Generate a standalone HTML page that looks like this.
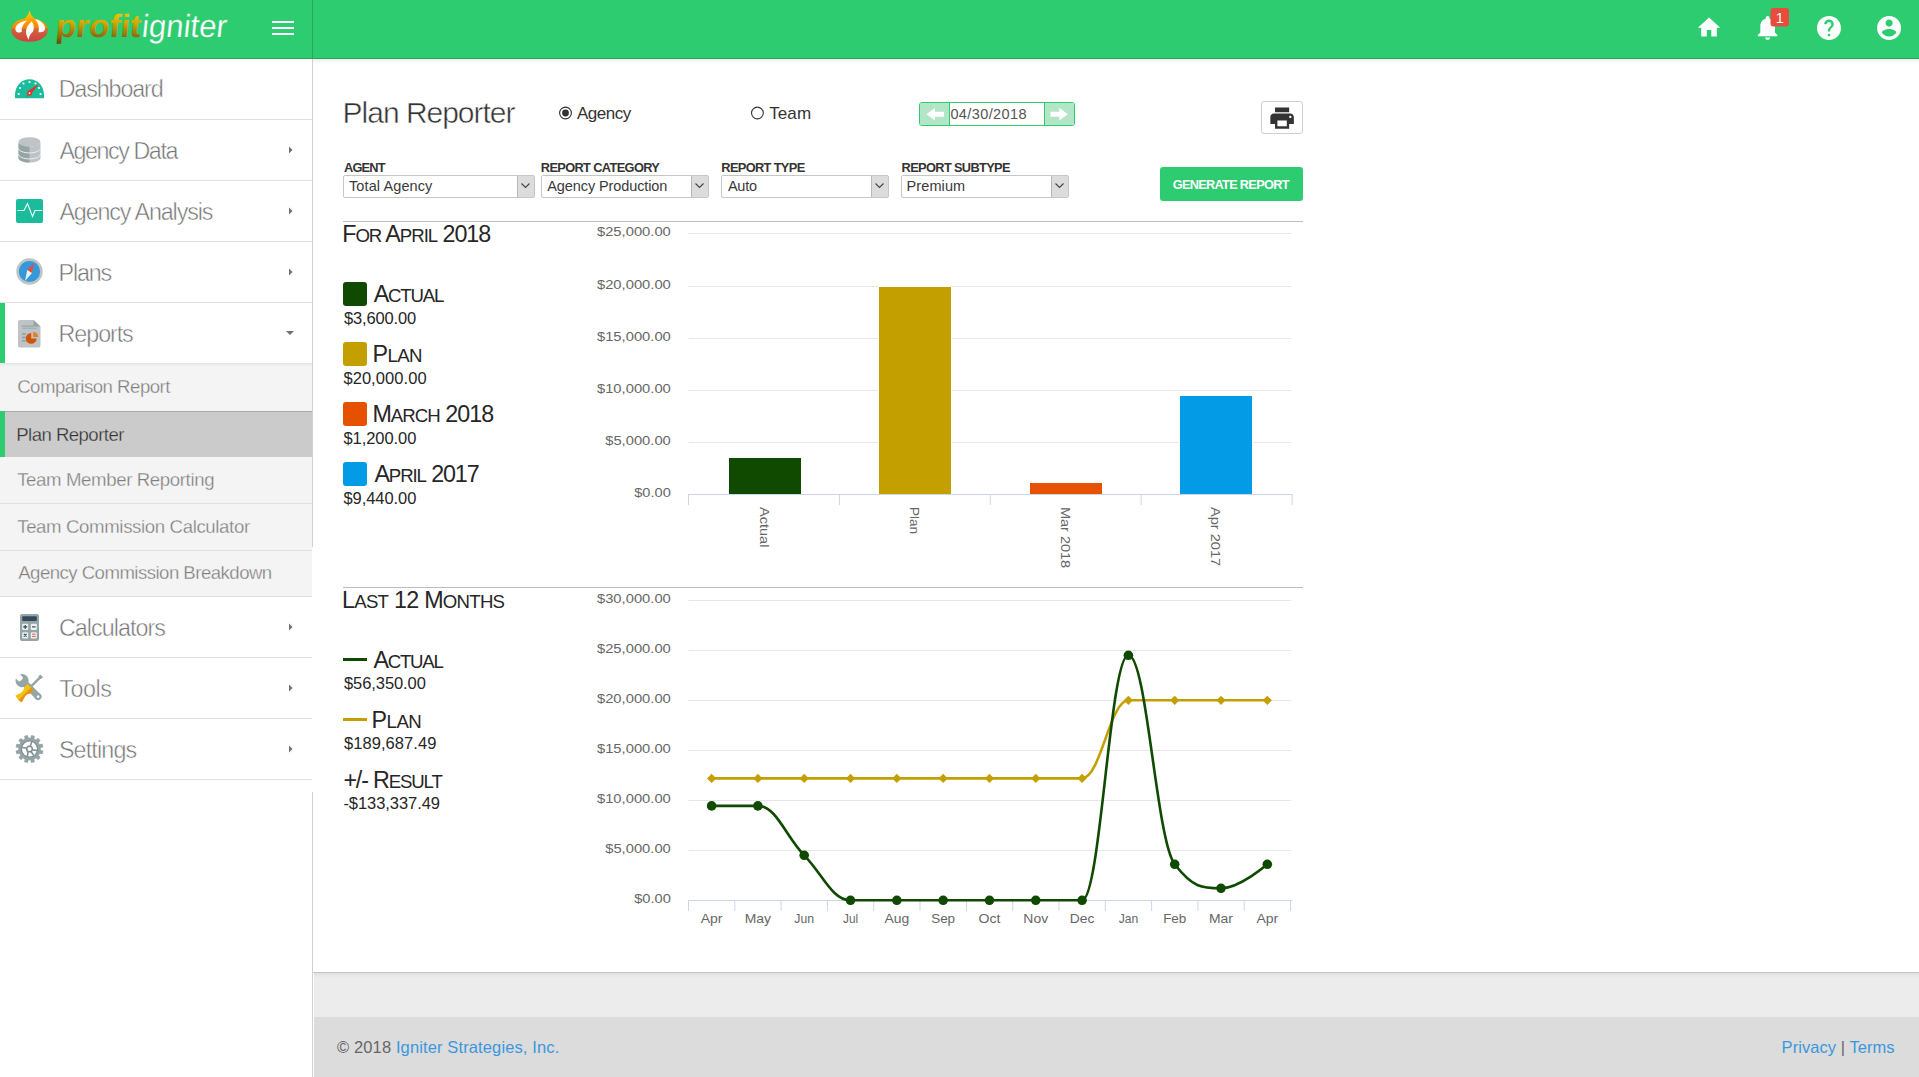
<!DOCTYPE html>
<html><head><meta charset="utf-8"><title>Plan Reporter</title>
<style>
html,body{margin:0;padding:0;width:1919px;height:1077px;overflow:hidden;background:#fff;font-family:"Liberation Sans", sans-serif;}
.b{position:absolute;box-sizing:content-box}
.t{position:absolute;white-space:nowrap;font-family:"Liberation Sans", sans-serif}
svg text{font-family:"Liberation Sans", sans-serif}
</style></head><body>
<div class="b" style="left:0px;top:0px;width:1919px;height:58px;background:#2ecc71"></div>
<div class="b" style="left:0px;top:58px;width:1919px;height:1px;background:#26a65b"></div>
<div class="b" style="left:312px;top:0px;width:1px;height:58px;background:#27a85c"></div>
<div class="b" style="left:313px;top:59px;width:1606px;height:5px;background:linear-gradient(#efefef,#fff)"></div>
<div class="b" style="left:312px;top:59px;width:1px;height:488px;background:#d0d0d0"></div>
<div class="b" style="left:312px;top:792px;width:1px;height:285px;background:#d0d0d0"></div>
<div class="b" style="left:0px;top:119px;width:312px;height:1px;background:#e0e0e0"></div>
<div class="b" style="left:0px;top:180px;width:312px;height:1px;background:#e0e0e0"></div>
<div class="b" style="left:0px;top:241px;width:312px;height:1px;background:#e0e0e0"></div>
<div class="b" style="left:0px;top:302px;width:312px;height:1px;background:#e0e0e0"></div>
<div class="b" style="left:0px;top:303px;width:5px;height:60px;background:#2ecc71"></div>
<div class="b" style="left:0px;top:363px;width:312px;height:234px;background:#f4f4f4"></div>
<div class="b" style="left:0px;top:363px;width:312px;height:4px;background:linear-gradient(#e6e6e6,#f4f4f4)"></div>
<div class="b" style="left:0px;top:411px;width:312px;height:46px;background:#cbcbcb"></div>
<div class="b" style="left:0px;top:411px;width:312px;height:1px;background:#a9a9a9"></div>
<div class="b" style="left:0px;top:411px;width:5px;height:46px;background:#2ecc71"></div>
<div class="b" style="left:0px;top:503px;width:312px;height:1px;background:#e0e0e0"></div>
<div class="b" style="left:0px;top:550px;width:312px;height:1px;background:#e0e0e0"></div>
<div class="b" style="left:0px;top:596px;width:312px;height:1px;background:#dedede"></div>
<div class="b" style="left:0px;top:657px;width:312px;height:1px;background:#e0e0e0"></div>
<div class="b" style="left:0px;top:718px;width:312px;height:1px;background:#e0e0e0"></div>
<div class="b" style="left:0px;top:779px;width:312px;height:1px;background:#e0e0e0"></div>
<div class="b" style="left:313px;top:972px;width:1606px;height:1px;background:#c4c4c4"></div>
<div class="b" style="left:314px;top:973px;width:1605px;height:44px;background:#ececec"></div>
<div class="b" style="left:314px;top:973px;width:1605px;height:5px;background:linear-gradient(#e0e0e0,#ececec)"></div>
<div class="b" style="left:314px;top:1017px;width:1605px;height:60px;background:#dcdcdc"></div>
<svg class="b" style="left:0;top:0" width="312" height="58" viewBox="0 0 312 58">
<defs>
<linearGradient id="onion" x1="0" y1="0" x2="0" y2="1">
<stop offset="0" stop-color="#ffd400"/><stop offset="0.55" stop-color="#ff7e00"/><stop offset="0.6" stop-color="#c8683e"/><stop offset="1" stop-color="#d63c40"/></linearGradient>
<linearGradient id="gold" x1="0" y1="0" x2="0" y2="1">
<stop offset="0" stop-color="#ffd800"/><stop offset="0.45" stop-color="#cfa300"/><stop offset="1" stop-color="#6a4a12"/></linearGradient>
</defs>
<path d="M29.5 10.5 C30.5 14.5 32.5 17 34.5 18.8 C42.5 20 47.8 24.5 47.8 30 C47.8 37 40 41.8 29.5 41.8 C19 41.8 11.2 37 11.2 30 C11.2 24.5 16.5 20 24.5 18.8 C26.5 17 28.5 14.5 29.5 10.5 Z" fill="url(#onion)"/>
<path d="M16 31.2 C14 27.5 17 22 27.5 20.6 C23.5 23.2 21.2 27.5 21.8 31.8 C20 32.8 17 32.6 16 31.2 Z" fill="#fff"/>
<path d="M31.8 21.2 C28 24.5 26 28 26 31.5 C26 35 27.5 38 29 40 C28.6 36.5 30 34.5 32.6 32 C34.2 30 34.5 25 31.8 21.2 Z" fill="#fff"/>
<path d="M35.2 19 C41 20.5 45.5 24.5 45 29 C44.5 31.5 42 32.8 38.5 32.2 C39.5 27.5 38.5 23 35.2 19 Z" fill="#fff"/>
<g transform="translate(0,36.8) skewX(-6)">
<text x="55" y="0" font-family="Liberation Sans" font-weight="bold" font-size="32" fill="url(#gold)" textLength="85" lengthAdjust="spacingAndGlyphs">profit</text>
<text x="141" y="0" font-family="Liberation Sans" font-size="32" fill="#fff" stroke="#2ecc71" stroke-width="0.25" paint-order="fill" textLength="85" lengthAdjust="spacingAndGlyphs">igniter</text>
</g>
<rect x="272" y="21" width="22" height="2" fill="#fff"/><rect x="272" y="27" width="22" height="2" fill="#fff"/><rect x="272" y="33" width="22" height="2" fill="#fff"/>
</svg>
<svg class="b" style="left:1680px;top:0" width="239" height="58" viewBox="1680 0 239 58">
<g transform="translate(1695.6,14.2) scale(1.12)"><path d="M10 20v-6h4v6h5v-8h3L12 3 2 12h3v8z" fill="#fff"/></g>
<g transform="translate(1753,13) scale(1.22)"><path d="M12 22c1.1 0 2-.9 2-2h-4c0 1.1.89 2 2 2zm6-6v-5c0-3.07-1.64-5.64-4.5-6.32V4c0-.83-.67-1.5-1.5-1.5s-1.5.67-1.5 1.5v.68C7.63 5.36 6 7.92 6 11v5l-2 2v1h16v-1l-2-2z" fill="#fff"/></g>
<rect x="1770.5" y="8" width="18.5" height="18.5" rx="3" fill="#e74c3c"/>
<text x="1779.8" y="22.8" font-family="Liberation Sans" font-size="14.5" fill="#fff" text-anchor="middle">1</text>
<g transform="translate(1814.6,13.5) scale(1.2)"><path d="M12 2C6.48 2 2 6.48 2 12s4.48 10 10 10 10-4.48 10-10S17.52 2 12 2zm1 17h-2v-2h2v2zm2.07-7.75l-.9.92C13.45 12.9 13 13.5 13 15h-2v-.5c0-1.1.45-2.1 1.17-2.830l1.24-1.26c.37-.36.59-.86.59-1.41 0-1.1-.9-2-2-2s-2 .9-2 2H8c0-2.21 1.790-4 4-4s4 1.79 4 4c0 .88-.36 1.68-.93 2.25z" fill="#fff"/></g>
<g transform="translate(1874.7,13.5) scale(1.2)"><path d="M12 2C6.48 2 2 6.48 2 12s4.48 10 10 10 10-4.48 10-10S17.52 2 12 2zm0 3c1.660 0 3 1.34 3 3s-1.34 3-3 3-3-1.34-3-3 1.34-3 3-3zm0 14.2c-2.5 0-4.71-1.28-6-3.22.03-1.99 4-3.08 6-3.08 1.99 0 5.97 1.09 6 3.080-1.29 1.94-3.5 3.22-6 3.22z" fill="#fff"/></g>
</svg>
<div id="s0" class="t" style="left:58.65px;top:78.28px;font-size:23.3px;line-height:23.3px;color:#737373;font-weight:normal;letter-spacing:-1.121px;-webkit-text-stroke:0.5px #fff">Dashboard</div>
<div id="s1" class="t" style="left:59.40px;top:140.48px;font-size:23.3px;line-height:23.3px;color:#737373;font-weight:normal;letter-spacing:-1.440px;-webkit-text-stroke:0.5px #fff">Agency Data</div>
<svg class="b" style="left:288px;top:146px" width="6" height="9"><path d="M1 0.5v7l3.5-3.5z" fill="#707070"/></svg>
<div id="s2" class="t" style="left:59.40px;top:201.48px;font-size:23.3px;line-height:23.3px;color:#737373;font-weight:normal;letter-spacing:-1.115px;-webkit-text-stroke:0.5px #fff">Agency Analysis</div>
<svg class="b" style="left:288px;top:207px" width="6" height="9"><path d="M1 0.5v7l3.5-3.5z" fill="#707070"/></svg>
<div id="s3" class="t" style="left:58.60px;top:262.38px;font-size:23.3px;line-height:23.3px;color:#737373;font-weight:normal;letter-spacing:-1.175px;-webkit-text-stroke:0.5px #fff">Plans</div>
<svg class="b" style="left:288px;top:268px" width="6" height="9"><path d="M1 0.5v7l3.5-3.5z" fill="#707070"/></svg>
<div id="s4" class="t" style="left:58.60px;top:322.68px;font-size:23.3px;line-height:23.3px;color:#737373;font-weight:normal;letter-spacing:-1.067px;-webkit-text-stroke:0.5px #fff">Reports</div>
<svg class="b" style="left:286px;top:331px" width="9" height="5"><path d="M0 0h8l-4 4z" fill="#707070"/></svg>
<div id="s5" class="t" style="left:58.90px;top:617.38px;font-size:23.3px;line-height:23.3px;color:#737373;font-weight:normal;letter-spacing:-0.950px;-webkit-text-stroke:0.5px #fff">Calculators</div>
<svg class="b" style="left:288px;top:623px" width="6" height="9"><path d="M1 0.5v7l3.5-3.5z" fill="#707070"/></svg>
<div id="s6" class="t" style="left:59.20px;top:678.28px;font-size:23.3px;line-height:23.3px;color:#737373;font-weight:normal;letter-spacing:-0.425px;-webkit-text-stroke:0.5px #fff">Tools</div>
<svg class="b" style="left:288px;top:684px" width="6" height="9"><path d="M1 0.5v7l3.5-3.5z" fill="#707070"/></svg>
<div id="s7" class="t" style="left:58.90px;top:739.48px;font-size:23.3px;line-height:23.3px;color:#737373;font-weight:normal;letter-spacing:-0.845px;-webkit-text-stroke:0.5px #fff">Settings</div>
<svg class="b" style="left:288px;top:745px" width="6" height="9"><path d="M1 0.5v7l3.5-3.5z" fill="#707070"/></svg>
<div id="m0" class="t" style="left:17.20px;top:378.06px;font-size:18.6px;line-height:18.6px;color:#7d7d7d;font-weight:normal;letter-spacing:-0.499px;-webkit-text-stroke:0.3px #f4f4f4">Comparison Report</div>
<div id="m1" class="t" style="left:16.20px;top:425.86px;font-size:18.6px;line-height:18.6px;color:#333;font-weight:normal;letter-spacing:-0.538px;-webkit-text-stroke:0.3px #cbcbcb">Plan Reporter</div>
<div id="m2" class="t" style="left:17.20px;top:470.86px;font-size:18.6px;line-height:18.6px;color:#7d7d7d;font-weight:normal;letter-spacing:-0.365px;-webkit-text-stroke:0.3px #f4f4f4">Team Member Reporting</div>
<div id="m3" class="t" style="left:17.20px;top:517.56px;font-size:18.6px;line-height:18.6px;color:#7d7d7d;font-weight:normal;letter-spacing:-0.356px;-webkit-text-stroke:0.3px #f4f4f4">Team Commission Calculator</div>
<div id="m4" class="t" style="left:18.20px;top:564.36px;font-size:18.6px;line-height:18.6px;color:#7d7d7d;font-weight:normal;letter-spacing:-0.525px;-webkit-text-stroke:0.3px #f4f4f4">Agency Commission Breakdown</div>
<svg class="b" style="left:0;top:59px" width="60" height="720" viewBox="0 59 60 720">
<path d="M15 98.3 L15 95 C15 86 21.5 79.3 29.5 79.3 C37.5 79.3 44 86 44 95 L44 98.3 Z" fill="#1abc9c"/>
<g fill="#fff"><circle cx="18.7" cy="94" r="1.1"/><circle cx="20" cy="88" r="1.1"/><circle cx="23.5" cy="83.5" r="1.1"/><circle cx="29.5" cy="82" r="1.1"/><circle cx="35.5" cy="83.5" r="1.1"/><circle cx="39" cy="88" r="1.1"/><circle cx="40.5" cy="94" r="1.1"/></g>
<path d="M38.8 83.8 L31.2 94 L28 91 Z" fill="#e0352b"/><path d="M27 95 L26 97 L28 96 Z" fill="#e0352b"/><circle cx="29.5" cy="93.2" r="2.5" fill="#e0352b"/><circle cx="29.5" cy="93.2" r="0.9" fill="#fff"/>
<ellipse cx="29.5" cy="142" rx="11" ry="4.8" fill="#bdc3c7"/>
<path d="M18.5 142 v16 c0 2.6 5 4.6 11 4.6 s11 -2 11 -4.6 v-16 c0 2.6 -5 4.6 -11 4.6 s-11 -2 -11 -4.6z" fill="#bdc3c7"/>
<path d="M18.5 142 v16 c0 2.6 5 4.6 11 4.6 v-16 c-6 0 -11 -2 -11 -4.6z" fill="#95a5a6"/>
<path d="M18.5 148.3 c0 2.6 5 4.6 11 4.6 s11 -2 11 -4.6" stroke="#ecf0f1" stroke-width="1" fill="none"/>
<path d="M18.5 154.3 c0 2.6 5 4.6 11 4.6 s11 -2 11 -4.6" stroke="#ecf0f1" stroke-width="1" fill="none"/>
<rect x="16" y="199" width="27" height="24" rx="2" fill="#1abc9c"/>
<path d="M17.5 210.5 H24 L27.5 203.5 L32.5 216.5 L35 210.5 H42" stroke="#fff" stroke-width="1.1" fill="none"/>
<circle cx="29.5" cy="271.5" r="13.2" fill="#bdc3c7"/>
<circle cx="29.5" cy="271.5" r="10.6" fill="#3498db"/>
<path d="M34 263 L27.2 270 L32 273 Z" fill="#e74c3c"/>
<path d="M25 281 L27.2 270 L32 273 Z" fill="#ecf0f1"/>
<path d="M18 322 q0-2 2-2 h13.5 l7 6.5 v19 q0 2-2 2 h-18.5 q-2 0-2-2z" fill="#bdc3c7"/>
<path d="M33.5 320 v6.5 h7z" fill="#95a5a6"/>
<rect x="22" y="325.5" width="12" height="1.2" fill="#95a5a6"/>
<rect x="22" y="327.6" width="15" height="1.4" fill="#a5b1b2"/>
<rect x="22" y="333" width="3.8" height="1.8" fill="#95a5a6"/><rect x="22" y="336.6" width="3.8" height="1.8" fill="#95a5a6"/><rect x="22" y="340" width="3.8" height="1.8" fill="#95a5a6"/>
<path d="M31.2 333 v5.4 h5.4 a5.4 5.4 0 1 1 -5.4 -5.4z" fill="#d35400"/>
<path d="M33.2 332 a5 5 0 0 1 5 5 h-5z" fill="#e67e22"/>
<rect x="20" y="614" width="19" height="27" rx="2" fill="#95a5a6"/>
<rect x="22.2" y="616.3" width="14.6" height="4.8" rx="1" fill="#34495e"/>
<rect x="22.2" y="623.8" width="6" height="6.2" rx="1" fill="#ecf0f1"/><rect x="30.8" y="623.8" width="6" height="6.2" rx="1" fill="#ecf0f1"/>
<rect x="22.2" y="632.2" width="6" height="6.2" rx="1" fill="#ecf0f1"/><rect x="30.8" y="632.2" width="6" height="6.2" rx="1" fill="#ecf0f1"/>
<path d="M25.2 624.9v4M23.2 626.9h4" stroke="#2c3e50" stroke-width="1.1"/><path d="M32 626.9h3.6" stroke="#2c3e50" stroke-width="1.1"/>
<path d="M23.8 633.8l2.8 2.8M26.6 633.8l-2.8 2.8" stroke="#2c3e50" stroke-width="1.1"/>
<path d="M32 634.2h3.6M32 636.4h3.6" stroke="#e74c3c" stroke-width="0.9"/>
<g transform="translate(29.5,688) rotate(-45)">
<rect x="-3.3" y="-9" width="6.6" height="21" fill="#95a5a6"/>
<circle cx="0" cy="12" r="3.6" fill="#95a5a6"/>
<circle cx="0" cy="12.2" r="1.4" fill="#fff"/>
<circle cx="0" cy="-10.5" r="6.6" fill="#95a5a6"/>
<path d="M-2.9 -18 H2.9 V-12.2 Q0 -10 -2.9 -12.2z" fill="#fff"/>
</g>
<g transform="translate(29.5,688) rotate(45)">
<rect x="-1.2" y="-15.5" width="2.4" height="15" fill="#95a5a6"/><rect x="-1.9" y="-17.3" width="3.8" height="3.2" rx="0.8" fill="#95a5a6"/>
<path d="M-4.3 -1.5 H4.3 V3 L2.7 6 V9 L4.6 15.5 Q0 17 -4.6 15.5 L-2.7 9 V6 L-4.3 3z" fill="#f1c40f"/>
<path d="M0.8 -1.5 H4.3 V3 L2.7 6 V9 L4.6 15.5 Q2.5 16.3 0.8 16.3z" fill="#e98f1e"/>
</g>
<path d="M29.50 737.80 L30.43 737.84 L31.35 735.12 L34.84 736.06 L34.27 738.87 L35.10 739.30 L35.89 739.80 L38.04 737.90 L40.60 740.46 L38.70 742.61 L39.20 743.40 L39.63 744.23 L42.44 743.66 L43.38 747.15 L40.66 748.07 L40.70 749.00 L40.66 749.93 L43.38 750.85 L42.44 754.34 L39.63 753.77 L39.20 754.60 L38.70 755.39 L40.60 757.54 L38.04 760.10 L35.89 758.20 L35.10 758.70 L34.27 759.13 L34.84 761.94 L31.35 762.88 L30.43 760.16 L29.50 760.20 L28.57 760.16 L27.65 762.88 L24.16 761.94 L24.73 759.13 L23.90 758.70 L23.11 758.20 L20.96 760.10 L18.40 757.54 L20.30 755.39 L19.80 754.60 L19.37 753.77 L16.56 754.34 L15.62 750.85 L18.34 749.93 L18.30 749.00 L18.34 748.07 L15.62 747.15 L16.56 743.66 L19.37 744.23 L19.80 743.40 L20.30 742.61 L18.40 740.46 L20.96 737.90 L23.11 739.80 L23.90 739.30 L24.73 738.87 L24.16 736.06 L27.65 735.12 L28.57 737.84Z" fill="#95a5a6"/>
<circle cx="29.5" cy="749" r="8.6" fill="#7f8c8d"/>
<circle cx="29.5" cy="749" r="7.5" fill="#fff"/>
<g stroke="#7f8c8d" stroke-width="1.5" fill="none">
<circle cx="29.5" cy="749" r="2.8"/>
<path d="M30.2 746.3 L31.8 741.8"/><path d="M32.2 749.8 L37 750.5"/><path d="M30.8 751.5 L33.5 755"/><path d="M28.2 751.5 L27.3 756.4"/><path d="M26.8 748.3 L22.2 747.5"/>
</g>
</svg>
<div id="title" class="t" style="left:342.60px;top:98.30px;font-size:30px;line-height:30px;color:#333;font-weight:normal;letter-spacing:-1.018px;-webkit-text-stroke:0.5px #fff">Plan Reporter</div>
<svg class="b" style="left:550px;top:100px" width="230" height="30" viewBox="550 100 230 30">
<circle cx="565.5" cy="113" r="5.9" fill="#fff" stroke="#333" stroke-width="1.1"/><circle cx="565.5" cy="113" r="3.4" fill="#333"/>
<circle cx="757.4" cy="113" r="5.9" fill="#fff" stroke="#333" stroke-width="1.1"/>
</svg>
<div id="agency" class="t" style="left:577.00px;top:104.61px;font-size:17px;line-height:17px;color:#333;font-weight:normal;letter-spacing:-0.480px;">Agency</div>
<div id="team" class="t" style="left:769.20px;top:104.61px;font-size:17px;line-height:17px;color:#333;font-weight:normal;letter-spacing:0.100px;">Team</div>
<div class="b" style="left:919px;top:102px;width:154px;height:22px;border:1px solid #2ecc71;border-radius:3px;background:#fff;overflow:hidden">
<div class="b" style="left:0;top:0;width:29px;height:22px;background:#b2e6c6;border-right:1px solid #2ecc71"></div>
<div class="b" style="left:124px;top:0;width:30px;height:22px;background:#b2e6c6;border-left:1px solid #2ecc71"></div>
</div>
<svg class="b" style="left:919px;top:102px" width="156" height="24" viewBox="919 102 156 24">
<path d="M926.5 114.2 L935 107.8 V111.7 H944 V116.7 H935 V120.6 Z" fill="#fff"/>
<path d="M1067.8 114.2 L1059.3 107.8 V111.7 H1050.5 V116.7 H1059.3 V120.6 Z" fill="#fff"/>
</svg>
<div id="date" class="t" style="left:950.40px;top:107.33px;font-size:14.5px;line-height:14.5px;color:#555;font-weight:normal;letter-spacing:0.390px;">04/30/2018</div>
<div class="b" style="left:1261px;top:101px;width:40px;height:31px;border:1px solid #cfcfcf;border-radius:3px;background:#fff"></div>
<svg class="b" style="left:1267.9px;top:103.5px" width="28.2" height="28.2" viewBox="0 0 24 24"><path d="M19 8H5c-1.66 0-3 1.34-3 3v6h4v4h12v-4h4v-6c0-1.66-1.34-3-3-3zm-3 11H8v-5h8v5zm3-7c-.55 0-1-.45-1-1s.45-1 1-1 1 .45 1 1-.45 1-1 1zm-1-9H6v4h12V3z" fill="#333"/></svg>
<div id="lab0" class="t" style="left:344.10px;top:162.06px;font-size:12.8px;line-height:12.8px;color:#333;font-weight:bold;letter-spacing:-0.850px;">AGENT</div>
<div id="lab1" class="t" style="left:540.80px;top:162.06px;font-size:12.8px;line-height:12.8px;color:#333;font-weight:bold;letter-spacing:-0.636px;">REPORT CATEGORY</div>
<div id="lab2" class="t" style="left:721.30px;top:162.06px;font-size:12.8px;line-height:12.8px;color:#333;font-weight:bold;letter-spacing:-0.640px;">REPORT TYPE</div>
<div id="lab3" class="t" style="left:901.60px;top:162.06px;font-size:12.8px;line-height:12.8px;color:#333;font-weight:bold;letter-spacing:-0.645px;">REPORT SUBTYPE</div>
<div class="b" style="left:343px;top:175px;width:190px;height:21px;border:1px solid #c6c6c6;border-radius:2px;background:#fff"></div>
<div class="b" style="left:517px;top:176px;width:16px;height:21px;background:#dcdcdc;border-left:1px solid #b8b8b8"></div>
<svg class="b" style="left:521px;top:183px" width="9" height="6"><path d="M0.5 0.5 L4.5 4.5 L8.5 0.5" stroke="#444" stroke-width="1.1" fill="none"/></svg>
<div id="sel0" class="t" style="left:349.00px;top:178.93px;font-size:14.5px;line-height:14.5px;color:#3a3a3a;font-weight:normal;letter-spacing:0.104px;">Total Agency</div>
<div class="b" style="left:541px;top:175px;width:166px;height:21px;border:1px solid #c6c6c6;border-radius:2px;background:#fff"></div>
<div class="b" style="left:691px;top:176px;width:16px;height:21px;background:#dcdcdc;border-left:1px solid #b8b8b8"></div>
<svg class="b" style="left:695px;top:183px" width="9" height="6"><path d="M0.5 0.5 L4.5 4.5 L8.5 0.5" stroke="#444" stroke-width="1.1" fill="none"/></svg>
<div id="sel1" class="t" style="left:547.30px;top:178.93px;font-size:14.5px;line-height:14.5px;color:#3a3a3a;font-weight:normal;letter-spacing:-0.102px;">Agency Production</div>
<div class="b" style="left:721px;top:175px;width:166px;height:21px;border:1px solid #c6c6c6;border-radius:2px;background:#fff"></div>
<div class="b" style="left:871px;top:176px;width:16px;height:21px;background:#dcdcdc;border-left:1px solid #b8b8b8"></div>
<svg class="b" style="left:875px;top:183px" width="9" height="6"><path d="M0.5 0.5 L4.5 4.5 L8.5 0.5" stroke="#444" stroke-width="1.1" fill="none"/></svg>
<div id="sel2" class="t" style="left:727.90px;top:178.93px;font-size:14.5px;line-height:14.5px;color:#3a3a3a;font-weight:normal;letter-spacing:-0.250px;">Auto</div>
<div class="b" style="left:901px;top:175px;width:166px;height:21px;border:1px solid #c6c6c6;border-radius:2px;background:#fff"></div>
<div class="b" style="left:1051px;top:176px;width:16px;height:21px;background:#dcdcdc;border-left:1px solid #b8b8b8"></div>
<svg class="b" style="left:1055px;top:183px" width="9" height="6"><path d="M0.5 0.5 L4.5 4.5 L8.5 0.5" stroke="#444" stroke-width="1.1" fill="none"/></svg>
<div id="sel3" class="t" style="left:906.50px;top:178.93px;font-size:14.5px;line-height:14.5px;color:#3a3a3a;font-weight:normal;letter-spacing:0.116px;">Premium</div>
<div class="b" style="left:1160px;top:167px;width:143px;height:34px;background:#2ecc71;border-radius:3px"></div>
<div id="gen" class="t" style="left:1172.70px;top:178.85px;font-size:12.7px;line-height:12.7px;color:#fff;font-weight:bold;letter-spacing:-0.656px;">GENERATE REPORT</div>
<div class="b" style="left:343px;top:221px;width:960px;height:1px;background:#bcbcbc"></div>
<div class="b" style="left:343px;top:587px;width:960px;height:1px;background:#bcbcbc"></div>
<div id="h1" class="t" style="left:342.20px;top:222.58px;font-size:23.3px;line-height:23.3px;color:#262626;font-weight:normal;letter-spacing:-1.047px;">F<span style="font-size:0.8em">OR</span> A<span style="font-size:0.8em">PRIL</span> 2018</div>
<div class="b" style="left:343px;top:282px;width:24px;height:24px;background:#0f4a00;border-radius:3px"></div>
<div id="lg0" class="t" style="left:373.70px;top:282.98px;font-size:23.3px;line-height:23.3px;color:#262626;font-weight:normal;letter-spacing:-1.180px;">A<span style="font-size:0.8em">CTUAL</span></div>
<div id="lv0" class="t" style="left:344.00px;top:310.38px;font-size:16.5px;line-height:16.5px;color:#262626;font-weight:normal;letter-spacing:-0.158px;">$3,600.00</div>
<div class="b" style="left:343px;top:342px;width:24px;height:24px;background:#c49f00;border-radius:3px"></div>
<div id="lg1" class="t" style="left:372.40px;top:342.98px;font-size:23.3px;line-height:23.3px;color:#262626;font-weight:normal;letter-spacing:-0.535px;">P<span style="font-size:0.8em">LAN</span></div>
<div id="lv1" class="t" style="left:343.40px;top:370.38px;font-size:16.5px;line-height:16.5px;color:#262626;font-weight:normal;letter-spacing:0.066px;">$20,000.00</div>
<div class="b" style="left:343px;top:402px;width:24px;height:24px;background:#e65100;border-radius:3px"></div>
<div id="lg2" class="t" style="left:372.40px;top:402.98px;font-size:23.3px;line-height:23.3px;color:#262626;font-weight:normal;letter-spacing:-0.955px;">M<span style="font-size:0.8em">ARCH</span> 2018</div>
<div id="lv2" class="t" style="left:343.40px;top:430.38px;font-size:16.5px;line-height:16.5px;color:#262626;font-weight:normal;letter-spacing:-0.050px;">$1,200.00</div>
<div class="b" style="left:343px;top:462px;width:24px;height:24px;background:#039be5;border-radius:3px"></div>
<div id="lg3" class="t" style="left:374.40px;top:462.98px;font-size:23.3px;line-height:23.3px;color:#262626;font-weight:normal;letter-spacing:-1.111px;">A<span style="font-size:0.8em">PRIL</span> 2017</div>
<div id="lv3" class="t" style="left:343.40px;top:490.38px;font-size:16.5px;line-height:16.5px;color:#262626;font-weight:normal;letter-spacing:-0.050px;">$9,440.00</div>
<div id="h2" class="t" style="left:342.00px;top:588.78px;font-size:23.3px;line-height:23.3px;color:#262626;font-weight:normal;letter-spacing:-0.740px;">L<span style="font-size:0.8em">AST</span> 12 M<span style="font-size:0.8em">ONTHS</span></div>
<div class="b" style="left:343px;top:658px;width:24px;height:3px;background:#0f4a00"></div>
<div id="l2a" class="t" style="left:373.40px;top:648.68px;font-size:23.3px;line-height:23.3px;color:#262626;font-weight:normal;letter-spacing:-1.240px;">A<span style="font-size:0.8em">CTUAL</span></div>
<div id="l2av" class="t" style="left:344.00px;top:675.03px;font-size:16.5px;line-height:16.5px;color:#262626;font-weight:normal;letter-spacing:-0.076px;">$56,350.00</div>
<div class="b" style="left:343px;top:718px;width:24px;height:3px;background:#c49f00"></div>
<div id="l2p" class="t" style="left:371.60px;top:708.58px;font-size:23.3px;line-height:23.3px;color:#262626;font-weight:normal;letter-spacing:-0.534px;">P<span style="font-size:0.8em">LAN</span></div>
<div id="l2pv" class="t" style="left:344.00px;top:734.93px;font-size:16.5px;line-height:16.5px;color:#262626;font-weight:normal;letter-spacing:0.060px;">$189,687.49</div>
<div id="l2r" class="t" style="left:343.40px;top:768.68px;font-size:23.3px;line-height:23.3px;color:#262626;font-weight:normal;letter-spacing:-1.156px;">+/- R<span style="font-size:0.8em">ESULT</span></div>
<div id="l2rv" class="t" style="left:343.40px;top:795.33px;font-size:16.5px;line-height:16.5px;color:#262626;font-weight:normal;letter-spacing:-0.054px;">-$133,337.49</div>
<svg class="b" style="left:0;top:0" width="1919" height="1077" viewBox="0 0 1919 1077">
<text x="670.80" y="497.00" font-family="Liberation Sans" font-size="13.4" fill="#666" text-anchor="end" textLength="36.62" lengthAdjust="spacingAndGlyphs">$0.00</text>
<path d="M688.5 442.5 H1291.5" stroke="#e6e6e6" stroke-width="1"/>
<text x="670.80" y="445.00" font-family="Liberation Sans" font-size="13.4" fill="#666" text-anchor="end" textLength="65.56" lengthAdjust="spacingAndGlyphs">$5,000.00</text>
<path d="M688.5 390.5 H1291.5" stroke="#e6e6e6" stroke-width="1"/>
<text x="670.80" y="393.00" font-family="Liberation Sans" font-size="13.4" fill="#666" text-anchor="end" textLength="73.83" lengthAdjust="spacingAndGlyphs">$10,000.00</text>
<path d="M688.5 338.5 H1291.5" stroke="#e6e6e6" stroke-width="1"/>
<text x="670.80" y="341.00" font-family="Liberation Sans" font-size="13.4" fill="#666" text-anchor="end" textLength="73.83" lengthAdjust="spacingAndGlyphs">$15,000.00</text>
<path d="M688.5 286.5 H1291.5" stroke="#e6e6e6" stroke-width="1"/>
<text x="670.80" y="289.00" font-family="Liberation Sans" font-size="13.4" fill="#666" text-anchor="end" textLength="73.83" lengthAdjust="spacingAndGlyphs">$20,000.00</text>
<path d="M688.5 233.5 H1291.5" stroke="#e6e6e6" stroke-width="1"/>
<text x="670.80" y="236.00" font-family="Liberation Sans" font-size="13.4" fill="#666" text-anchor="end" textLength="73.83" lengthAdjust="spacingAndGlyphs">$25,000.00</text>
<rect x="728" y="457" width="74" height="37" fill="#fff"/>
<rect x="729" y="458" width="72" height="36" fill="#0f4a00"/>
<text transform="translate(760.0,507) rotate(90)" font-family="Liberation Sans" font-size="13.4" fill="#666" text-anchor="start" textLength="40.36" lengthAdjust="spacingAndGlyphs">Actual</text>
<rect x="878" y="286" width="74" height="208" fill="#fff"/>
<rect x="879" y="287" width="72" height="207" fill="#c49f00"/>
<text transform="translate(910.0,507) rotate(90)" font-family="Liberation Sans" font-size="13.4" fill="#666" text-anchor="start" textLength="27.06" lengthAdjust="spacingAndGlyphs">Plan</text>
<rect x="1029" y="482" width="74" height="12" fill="#fff"/>
<rect x="1030" y="483" width="72" height="11" fill="#e65100"/>
<text transform="translate(1061.0,507) rotate(90)" font-family="Liberation Sans" font-size="13.4" fill="#666" text-anchor="start" textLength="61.14" lengthAdjust="spacingAndGlyphs">Mar 2018</text>
<rect x="1179" y="395" width="74" height="99" fill="#fff"/>
<rect x="1180" y="396" width="72" height="98" fill="#039be5"/>
<text transform="translate(1211.0,507) rotate(90)" font-family="Liberation Sans" font-size="13.4" fill="#666" text-anchor="start" textLength="59.11" lengthAdjust="spacingAndGlyphs">Apr 2017</text>
<path d="M688 494.5 H1292.5" stroke="#ccd6eb" stroke-width="1"/>
<path d="M688.5 494 V505" stroke="#ccd6eb" stroke-width="1"/>
<path d="M839.4 494 V505" stroke="#ccd6eb" stroke-width="1"/>
<path d="M990.3 494 V505" stroke="#ccd6eb" stroke-width="1"/>
<path d="M1141.2 494 V505" stroke="#ccd6eb" stroke-width="1"/>
<path d="M1292.1 494 V505" stroke="#ccd6eb" stroke-width="1"/>
<text x="670.80" y="903.00" font-family="Liberation Sans" font-size="13.4" fill="#666" text-anchor="end" textLength="36.62" lengthAdjust="spacingAndGlyphs">$0.00</text>
<path d="M688.5 850.5 H1291.5" stroke="#e6e6e6" stroke-width="1"/>
<text x="670.80" y="853.00" font-family="Liberation Sans" font-size="13.4" fill="#666" text-anchor="end" textLength="65.56" lengthAdjust="spacingAndGlyphs">$5,000.00</text>
<path d="M688.5 800.5 H1291.5" stroke="#e6e6e6" stroke-width="1"/>
<text x="670.80" y="803.00" font-family="Liberation Sans" font-size="13.4" fill="#666" text-anchor="end" textLength="73.83" lengthAdjust="spacingAndGlyphs">$10,000.00</text>
<path d="M688.5 750.5 H1291.5" stroke="#e6e6e6" stroke-width="1"/>
<text x="670.80" y="753.00" font-family="Liberation Sans" font-size="13.4" fill="#666" text-anchor="end" textLength="73.83" lengthAdjust="spacingAndGlyphs">$15,000.00</text>
<path d="M688.5 700.5 H1291.5" stroke="#e6e6e6" stroke-width="1"/>
<text x="670.80" y="703.00" font-family="Liberation Sans" font-size="13.4" fill="#666" text-anchor="end" textLength="73.83" lengthAdjust="spacingAndGlyphs">$20,000.00</text>
<path d="M688.5 650.5 H1291.5" stroke="#e6e6e6" stroke-width="1"/>
<text x="670.80" y="653.00" font-family="Liberation Sans" font-size="13.4" fill="#666" text-anchor="end" textLength="73.83" lengthAdjust="spacingAndGlyphs">$25,000.00</text>
<path d="M688.5 600.5 H1291.5" stroke="#e6e6e6" stroke-width="1"/>
<text x="670.80" y="603.00" font-family="Liberation Sans" font-size="13.4" fill="#666" text-anchor="end" textLength="73.83" lengthAdjust="spacingAndGlyphs">$30,000.00</text>
<path d="M688 900.5 H1292.5" stroke="#ccd6eb" stroke-width="1"/>
<path d="M688.5 900 V911" stroke="#ccd6eb" stroke-width="1"/>
<path d="M734.8 900 V911" stroke="#ccd6eb" stroke-width="1"/>
<path d="M781.1 900 V911" stroke="#ccd6eb" stroke-width="1"/>
<path d="M827.4 900 V911" stroke="#ccd6eb" stroke-width="1"/>
<path d="M873.7 900 V911" stroke="#ccd6eb" stroke-width="1"/>
<path d="M920.0 900 V911" stroke="#ccd6eb" stroke-width="1"/>
<path d="M966.4 900 V911" stroke="#ccd6eb" stroke-width="1"/>
<path d="M1012.7 900 V911" stroke="#ccd6eb" stroke-width="1"/>
<path d="M1059.0 900 V911" stroke="#ccd6eb" stroke-width="1"/>
<path d="M1105.3 900 V911" stroke="#ccd6eb" stroke-width="1"/>
<path d="M1151.6 900 V911" stroke="#ccd6eb" stroke-width="1"/>
<path d="M1197.9 900 V911" stroke="#ccd6eb" stroke-width="1"/>
<path d="M1244.2 900 V911" stroke="#ccd6eb" stroke-width="1"/>
<path d="M1290.5 900 V911" stroke="#ccd6eb" stroke-width="1"/>
<text x="711.60" y="922.80" font-family="Liberation Sans" font-size="13.4" fill="#666" text-anchor="middle" textLength="21.89" lengthAdjust="spacingAndGlyphs">Apr</text>
<text x="757.91" y="922.80" font-family="Liberation Sans" font-size="13.4" fill="#666" text-anchor="middle" textLength="26.28" lengthAdjust="spacingAndGlyphs">May</text>
<text x="804.22" y="922.80" font-family="Liberation Sans" font-size="13.4" fill="#666" text-anchor="middle" textLength="19.71" lengthAdjust="spacingAndGlyphs">Jun</text>
<text x="850.53" y="922.80" font-family="Liberation Sans" font-size="13.4" fill="#666" text-anchor="middle" textLength="15.09" lengthAdjust="spacingAndGlyphs">Jul</text>
<text x="896.84" y="922.80" font-family="Liberation Sans" font-size="13.4" fill="#666" text-anchor="middle" textLength="24.78" lengthAdjust="spacingAndGlyphs">Aug</text>
<text x="943.15" y="922.80" font-family="Liberation Sans" font-size="13.4" fill="#666" text-anchor="middle" textLength="23.90" lengthAdjust="spacingAndGlyphs">Sep</text>
<text x="989.46" y="922.80" font-family="Liberation Sans" font-size="13.4" fill="#666" text-anchor="middle" textLength="21.88" lengthAdjust="spacingAndGlyphs">Oct</text>
<text x="1035.77" y="922.80" font-family="Liberation Sans" font-size="13.4" fill="#666" text-anchor="middle" textLength="24.77" lengthAdjust="spacingAndGlyphs">Nov</text>
<text x="1082.08" y="922.80" font-family="Liberation Sans" font-size="13.4" fill="#666" text-anchor="middle" textLength="24.56" lengthAdjust="spacingAndGlyphs">Dec</text>
<text x="1128.39" y="922.80" font-family="Liberation Sans" font-size="13.4" fill="#666" text-anchor="middle" textLength="19.44" lengthAdjust="spacingAndGlyphs">Jan</text>
<text x="1174.70" y="922.80" font-family="Liberation Sans" font-size="13.4" fill="#666" text-anchor="middle" textLength="23.13" lengthAdjust="spacingAndGlyphs">Feb</text>
<text x="1221.01" y="922.80" font-family="Liberation Sans" font-size="13.4" fill="#666" text-anchor="middle" textLength="23.93" lengthAdjust="spacingAndGlyphs">Mar</text>
<text x="1267.32" y="922.80" font-family="Liberation Sans" font-size="13.4" fill="#666" text-anchor="middle" textLength="21.89" lengthAdjust="spacingAndGlyphs">Apr</text>
<path d="M 711.60 778.42 C 711.60 778.42 739.39 778.42 757.91 778.42 C 776.43 778.42 785.70 778.42 804.22 778.42 C 822.74 778.42 832.01 778.42 850.53 778.42 C 869.05 778.42 878.32 778.42 896.84 778.42 C 915.36 778.42 924.63 778.42 943.15 778.42 C 961.67 778.42 970.94 778.42 989.46 778.42 C 1007.98 778.42 1017.25 778.42 1035.77 778.42 C 1054.29 778.42 1063.56 778.42 1082.08 778.42 C 1100.60 778.42 1109.87 700.30 1128.39 700.30 C 1146.91 700.30 1156.18 700.30 1174.70 700.30 C 1193.22 700.30 1202.49 700.30 1221.01 700.30 C 1239.53 700.30 1267.32 700.30 1267.32 700.30" stroke="#c49f00" stroke-width="2.6" fill="none"/>
<path d="M711.60 773.82 L716.20 778.42 L711.60 783.02 L707.00 778.42Z" fill="#c49f00"/>
<path d="M757.91 773.82 L762.51 778.42 L757.91 783.02 L753.31 778.42Z" fill="#c49f00"/>
<path d="M804.22 773.82 L808.82 778.42 L804.22 783.02 L799.62 778.42Z" fill="#c49f00"/>
<path d="M850.53 773.82 L855.13 778.42 L850.53 783.02 L845.93 778.42Z" fill="#c49f00"/>
<path d="M896.84 773.82 L901.44 778.42 L896.84 783.02 L892.24 778.42Z" fill="#c49f00"/>
<path d="M943.15 773.82 L947.75 778.42 L943.15 783.02 L938.55 778.42Z" fill="#c49f00"/>
<path d="M989.46 773.82 L994.06 778.42 L989.46 783.02 L984.86 778.42Z" fill="#c49f00"/>
<path d="M1035.77 773.82 L1040.37 778.42 L1035.77 783.02 L1031.17 778.42Z" fill="#c49f00"/>
<path d="M1082.08 773.82 L1086.68 778.42 L1082.08 783.02 L1077.48 778.42Z" fill="#c49f00"/>
<path d="M1128.39 695.70 L1132.99 700.30 L1128.39 704.90 L1123.79 700.30Z" fill="#c49f00"/>
<path d="M1174.70 695.70 L1179.30 700.30 L1174.70 704.90 L1170.10 700.30Z" fill="#c49f00"/>
<path d="M1221.01 695.70 L1225.61 700.30 L1221.01 704.90 L1216.41 700.30Z" fill="#c49f00"/>
<path d="M1267.32 695.70 L1271.92 700.30 L1267.32 704.90 L1262.72 700.30Z" fill="#c49f00"/>
<path d="M 711.60 805.90 C 711.60 805.90 739.39 805.90 757.91 805.90 C 776.43 805.90 785.70 836.42 804.22 855.30 C 822.74 874.18 832.01 900.30 850.53 900.30 C 869.05 900.30 878.32 900.30 896.84 900.30 C 915.36 900.30 924.63 900.30 943.15 900.30 C 961.67 900.30 970.94 900.30 989.46 900.30 C 1007.98 900.30 1017.25 900.30 1035.77 900.30 C 1054.29 900.30 1063.56 900.30 1082.08 900.30 C 1100.60 900.30 1109.87 655.30 1128.39 655.30 C 1146.91 655.30 1156.18 840.30 1174.70 864.30 C 1193.22 888.30 1202.49 888.30 1221.01 888.30 C 1239.53 888.30 1267.32 864.30 1267.32 864.30" stroke="#0f4a00" stroke-width="2.6" fill="none"/>
<circle cx="711.60" cy="805.90" r="4.8" fill="#0f4a00"/>
<circle cx="757.91" cy="805.90" r="4.8" fill="#0f4a00"/>
<circle cx="804.22" cy="855.30" r="4.8" fill="#0f4a00"/>
<circle cx="850.53" cy="900.30" r="4.8" fill="#0f4a00"/>
<circle cx="896.84" cy="900.30" r="4.8" fill="#0f4a00"/>
<circle cx="943.15" cy="900.30" r="4.8" fill="#0f4a00"/>
<circle cx="989.46" cy="900.30" r="4.8" fill="#0f4a00"/>
<circle cx="1035.77" cy="900.30" r="4.8" fill="#0f4a00"/>
<circle cx="1082.08" cy="900.30" r="4.8" fill="#0f4a00"/>
<circle cx="1128.39" cy="655.30" r="4.8" fill="#0f4a00"/>
<circle cx="1174.70" cy="864.30" r="4.8" fill="#0f4a00"/>
<circle cx="1221.01" cy="888.30" r="4.8" fill="#0f4a00"/>
<circle cx="1267.32" cy="864.30" r="4.8" fill="#0f4a00"/>
</svg>
<div id="foot" class="t" style="left:337.00px;top:1039.13px;font-size:16.5px;line-height:16.5px;color:#666;font-weight:normal;letter-spacing:0.124px;">&copy; 2018 <span style="color:#3b97dd">Igniter Strategies, Inc.</span></div>
<div id="priv" class="t" style="left:1781.60px;top:1039.23px;font-size:16.5px;line-height:16.5px;color:#666;font-weight:normal;letter-spacing:0.056px;"><span style="color:#3b97dd">Privacy</span> | <span style="color:#3b97dd">Terms</span></div>
</body></html>
